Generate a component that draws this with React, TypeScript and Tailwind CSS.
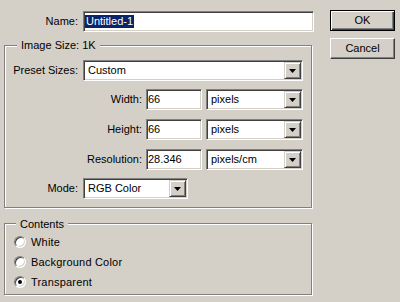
import React, { useState } from "react";

const sunken =
  "border border-t-[#808080] border-l-[#808080] border-b-white border-r-white shadow-[inset_1px_1px_0_#404040,inset_-1px_-1px_0_#d4d0c8] bg-white";
const raised =
  "border border-t-white border-l-white border-b-[#404040] border-r-[#404040] shadow-[inset_-1px_-1px_0_#808080]";
const etched =
  "relative border border-[#808080] shadow-[1px_1px_0_#ffffff,inset_1px_1px_0_#ffffff]";

function Select({ value, width }: { value: string; width: string }) {
  return (
    <div className={`${sunken} ${width} h-[21px] flex items-center`}>
      <span className="flex-1 pl-[4px] leading-[13px] truncate">{value}</span>
      <div className="w-[17px] h-[17px] mr-[1px] flex items-center justify-center bg-[#d4d0c8] border border-t-[#d4d0c8] border-l-[#d4d0c8] border-b-[#404040] border-r-[#404040] shadow-[inset_1px_1px_0_#ffffff,inset_-1px_-1px_0_#808080]">
        <svg width="7" height="4" viewBox="0 0 7 4" className="mt-[1px]">
          <path d="M0 0h7L3.5 4z" fill="#000" />
        </svg>
      </div>
    </div>
  );
}

function Field({ label, value, unit }: { label: string; value: string; unit: string }) {
  return (
    <div className="flex items-center h-[21px]">
      <span className="w-[137px] text-right leading-[13px]">{label}</span>
      <div className={`${sunken} ml-[4px] w-[56px] h-[21px] flex items-center pl-[1px] leading-[13px]`}>
        {value}
      </div>
      <div className="ml-[4px]">
        <Select value={unit} width="w-[97px]" />
      </div>
    </div>
  );
}

function Radio({ label, checked, onClick }: { label: string; checked: boolean; onClick: () => void }) {
  return (
    <div className="flex items-center h-[20px] cursor-default" onClick={onClick}>
      <div className="w-[12px] h-[12px] rounded-full bg-white border border-t-[#808080] border-l-[#808080] border-b-white border-r-white shadow-[inset_1px_1px_0_#404040,inset_-1px_-1px_0_#d4d0c8] flex items-center justify-center">
        {checked && <div className="w-[4px] h-[4px] rounded-full bg-black" />}
      </div>
      <span className="ml-[5px] leading-[13px] tracking-[0.2px]">{label}</span>
    </div>
  );
}

export default function App() {
  const [contents, setContents] = useState("Transparent");

  return (
    <div
      className="w-[400px] h-[302px] bg-[#d4d0c8] text-black text-[11px] flex"
      style={{ fontFamily: '"Liberation Sans", Arial, sans-serif' }}
    >
      {/* 왼쪽: 입력 영역 */}
      <div className="w-[330px] pl-[4px] pt-[11px] flex flex-col">
        <div className="flex items-center h-[21px]">
          <span className="w-[74px] text-right leading-[13px]">Name:</span>
          <div className={`${sunken} ml-[5px] w-[231px] h-[21px] flex items-center pl-[1px]`}>
            <span className="bg-[#0a246a] text-white px-[1px] leading-[13px]">Untitled-1</span>
          </div>
        </div>

        {/* Image Size 그룹 */}
        <div className={`${etched} mt-[13px] w-[308px] h-[163px] pt-[14px]`}>
          <span className="absolute left-[12px] top-[-7px] px-[4px] bg-[#d4d0c8] leading-[13px]">
            Image Size: 1K
          </span>
          <div className="flex items-center h-[21px]">
            <span className="w-[73px] text-right leading-[13px]">Preset Sizes:</span>
            <div className="ml-[5px]">
              <Select value="Custom" width="w-[220px]" />
            </div>
          </div>
          <div className="mt-[8px]">
            <Field label="Width:" value="66" unit="pixels" />
          </div>
          <div className="mt-[9px]">
            <Field label="Height:" value="66" unit="pixels" />
          </div>
          <div className="mt-[9px]">
            <Field label="Resolution:" value="28.346" unit="pixels/cm" />
          </div>
          <div className="mt-[8px] flex items-center h-[21px]">
            <span className="w-[73px] text-right leading-[13px]">Mode:</span>
            <div className="ml-[5px]">
              <Select value="RGB Color" width="w-[105px]" />
            </div>
          </div>
        </div>

        {/* Contents 그룹 */}
        <div className={`${etched} mt-[15px] w-[308px] h-[72px] pt-[8px] pl-[9px]`}>
          <span className="absolute left-[11px] top-[-6px] px-[4px] bg-[#d4d0c8] leading-[13px]">
            Contents
          </span>
          {["White", "Background Color", "Transparent"].map((c) => (
            <Radio key={c} label={c} checked={contents === c} onClick={() => setContents(c)} />
          ))}
        </div>
      </div>

      {/* 오른쪽: 버튼 */}
      <div className="pt-[10px] flex flex-col">
        <button className="w-[65px] h-[21px] border border-black shadow-[inset_1px_1px_0_#ffffff,inset_-1px_-1px_0_#404040,inset_-2px_-2px_0_#808080] leading-[13px]">
          OK
        </button>
        <button className={`${raised} mt-[7px] w-[65px] h-[21px] leading-[13px]`}>Cancel</button>
      </div>
    </div>
  );
}
